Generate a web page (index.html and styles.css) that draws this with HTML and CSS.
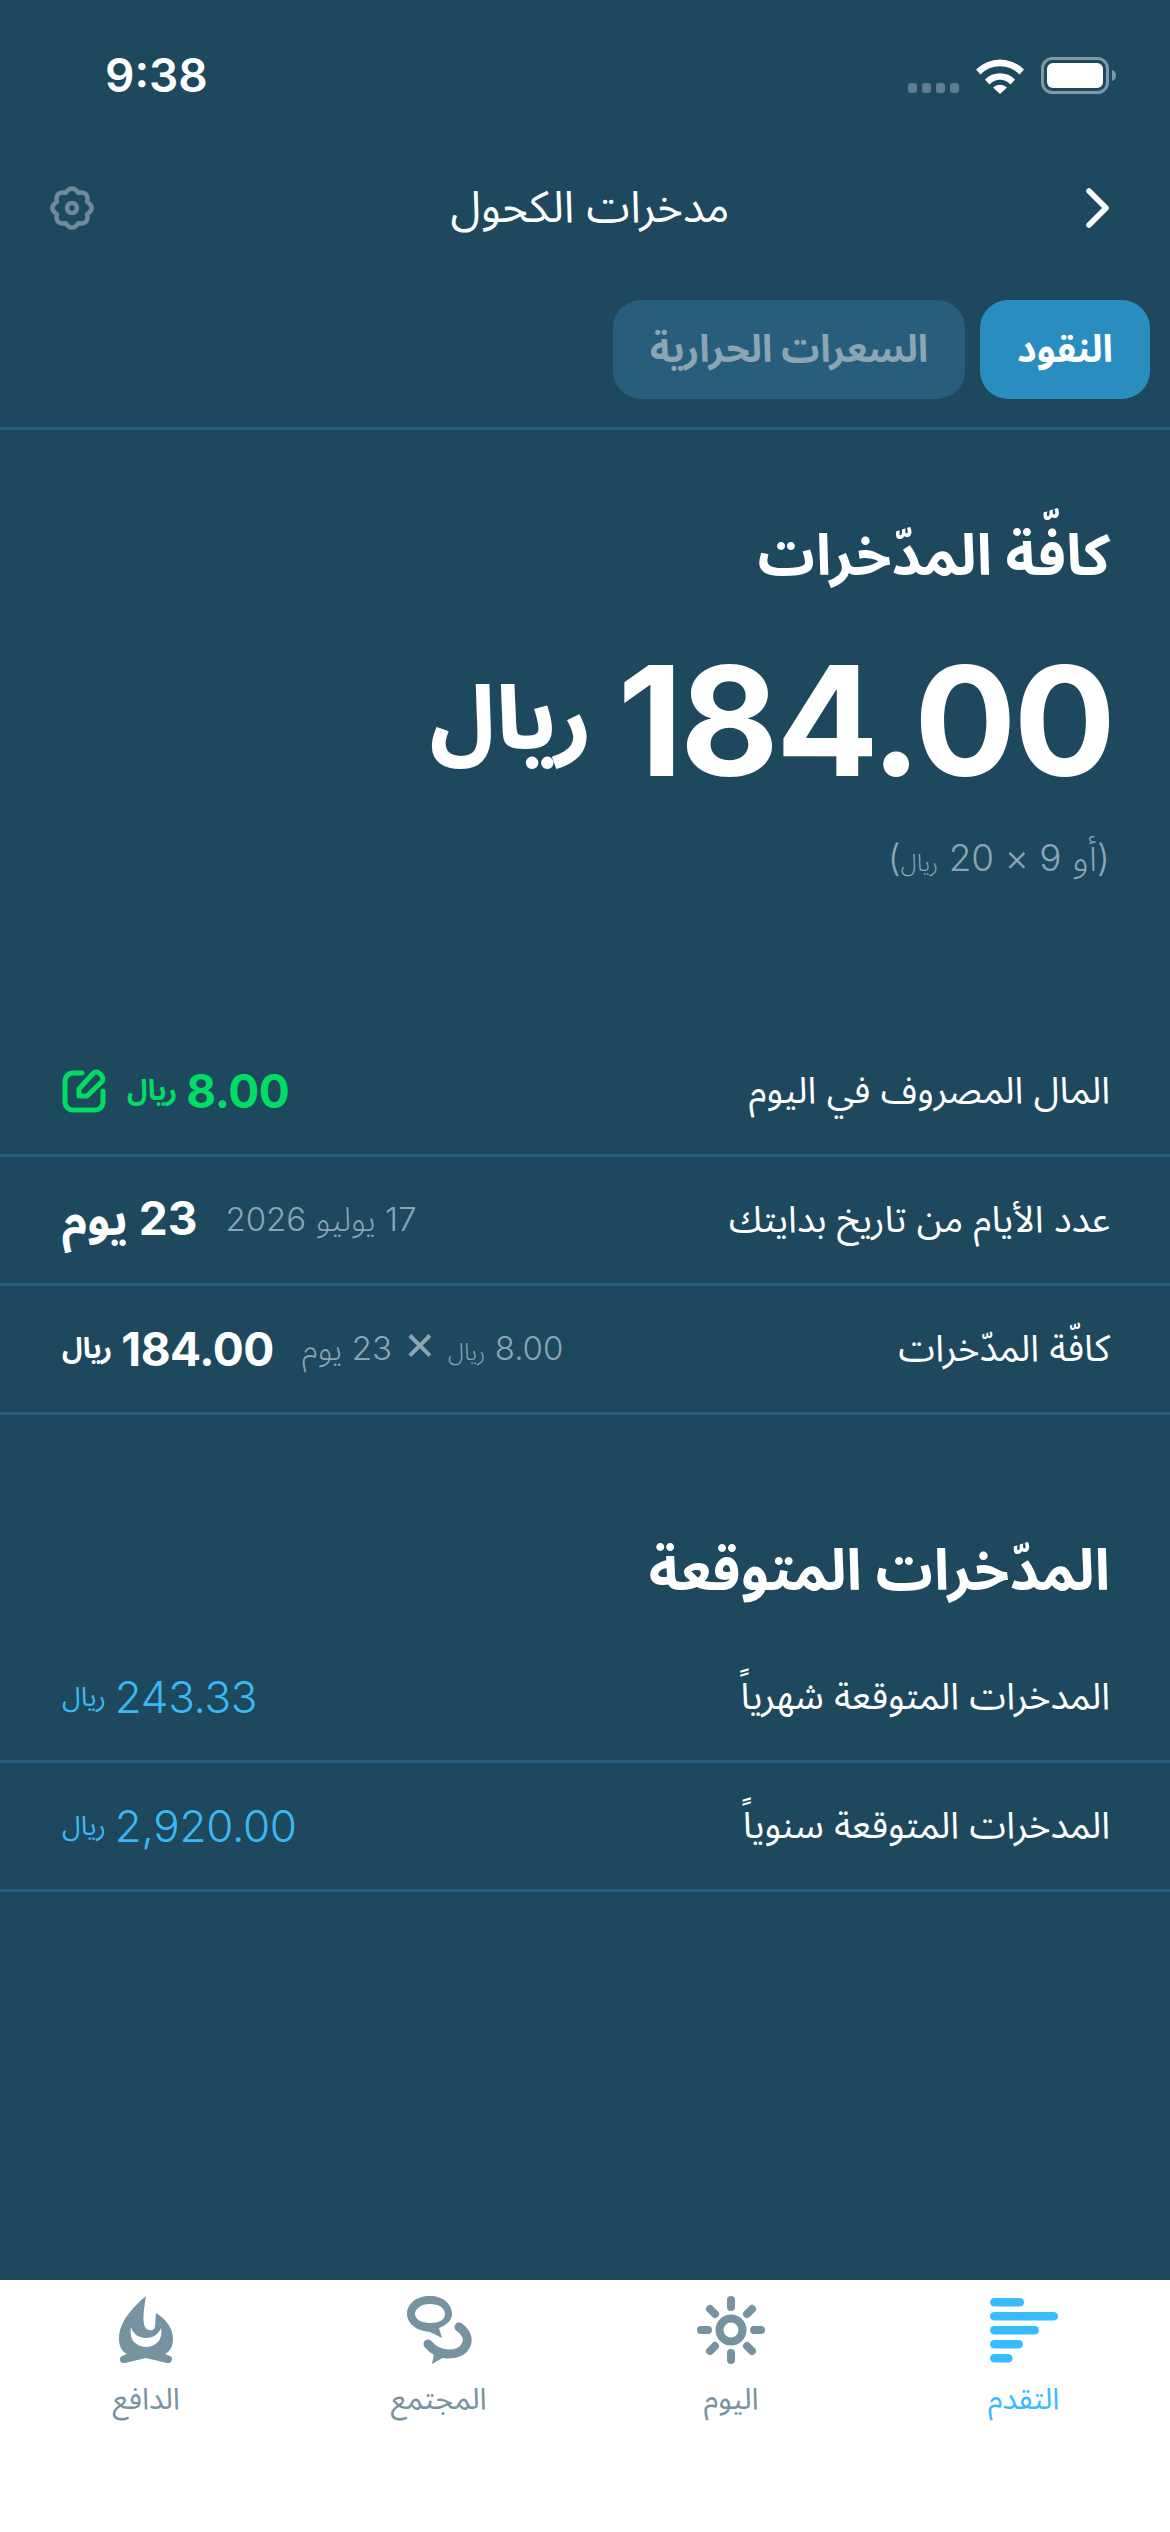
FILE: index.html
```html
<!DOCTYPE html>
<html lang="ar" dir="rtl">
  <head>
    <meta charset="UTF-8" />
    <meta name="viewport" content="width=device-width, initial-scale=1.0" />
    <title>مدخرات الكحول</title>
    <link rel="stylesheet" href="styles.css">
  </head>
  <body>
    <div class="page">
      <div class="status-bar">
        <span class="status-time">9:38</span>
        <div class="status-icons">
          <svg class="signal-icon" width="51" height="10" viewBox="0 0 51 10">
            <rect x="0" y="0" width="9" height="10" rx="3" />
            <rect x="14" y="0" width="9" height="10" rx="3" />
            <rect x="28" y="0" width="9" height="10" rx="3" />
            <rect x="42" y="0" width="9" height="10" rx="3" />
          </svg>
          <svg class="wifi-icon" width="48" height="36" viewBox="0 0 48 36">
            <path d="M0 11.500a34 34 0 0 1 48 0l-4.500 5a27 27 0 0 0-39 0z" />
            <path d="M9 21.500a21 21 0 0 1 30 0l-4.500 5a14 14 0 0 0-21 0z" />
            <path d="M17 29.500a10 10 0 0 1 14 0L24 36z" />
          </svg>
          <svg class="battery-icon" width="75" height="37" viewBox="0 0 75 37">
            <rect class="battery-shell" x="1.500" y="1.500" width="65" height="34" rx="10" />
            <rect class="battery-fill" x="6" y="6" width="56" height="25" rx="6" />
            <path class="battery-cap" d="M71 13c3 1 4 3 4 5.500s-1 4.500-4 5.500z" />
          </svg>
        </div>
      </div>

      <div class="nav-bar">
        <svg class="back-icon" width="24" height="40" viewBox="0 0 24 40">
          <path d="M3 3l17 17L3 37" />
        </svg>
        <h1 class="nav-title">مدخرات الكحول</h1>
        <svg class="gear-icon" width="44" height="44" viewBox="0 0 44 44">
          <path d="M37.200 15.700Q46 22 37.200 28.300Q39 39 28.300 37.200Q22 46 15.700 37.200Q5 39 6.800 28.300Q-2 22 6.800 15.700Q5 5 15.700 6.800Q22 -2 28.300 6.800Q39 5 37.200 15.700Z" />
          <circle cx="22" cy="22" r="5" />
        </svg>
      </div>

      <div class="tabs">
        <div class="tab tab-active">النقود</div>
        <div class="tab">السعرات الحرارية</div>
      </div>

      <section class="summary">
        <h2 class="section-title">كافّة المدّخرات</h2>
        <div class="total">
          <span class="total-num">184.00</span>
          <span class="total-cur">ريال</span>
        </div>
        <p class="total-note">(أو 9 × 20 <small>ريال</small>)</p>
      </section>

      <div class="rows">
        <div class="row">
          <span class="row-label">المال المصروف في اليوم</span>
          <div class="row-value">
            <span class="num-bold green">8.00</span>
            <span class="cur green">ريال</span>
            <svg class="edit-icon" width="44" height="44" viewBox="0 0 44 44">
              <path d="M20 4H11a8 8 0 0 0-8 8v21a8 8 0 0 0 8 8h22a8 8 0 0 0 8-8V22" />
              <path d="M17 20L31 4.500a4.500 4.500 0 0 1 6.500 0l2 2a4.500 4.500 0 0 1 0 6.500L25 27H17z" />
            </svg>
          </div>
        </div>
        <div class="row">
          <span class="row-label">عدد الأيام من تاريخ بدايتك</span>
          <div class="row-value">
            <span class="muted">17 يوليو 2026</span>
            <span class="num-bold white">23 يوم</span>
          </div>
        </div>
        <div class="row">
          <span class="row-label">كافّة المدّخرات</span>
          <div class="row-value">
            <span class="muted">8.00 <small>ريال</small> <b class="times">×</b> 23 يوم</span>
            <span class="num-bold white">184.00</span>
            <span class="cur white">ريال</span>
          </div>
        </div>
      </div>

      <section class="projected">
        <h2 class="section-title">المدّخرات المتوقعة</h2>
      </section>

      <div class="rows">
        <div class="row">
          <span class="row-label">المدخرات المتوقعة شهرياً</span>
          <div class="row-value">
            <span class="num-light">243.33</span>
            <span class="cur-light">ريال</span>
          </div>
        </div>
        <div class="row">
          <span class="row-label">المدخرات المتوقعة سنوياً</span>
          <div class="row-value">
            <span class="num-light">2,920.00</span>
            <span class="cur-light">ريال</span>
          </div>
        </div>
      </div>

      <nav class="tab-bar">
        <div class="tab-item tab-item-active">
          <svg width="68" height="68" viewBox="0 0 68 68">
            <rect x="0" y="2" width="34" height="8.500" rx="4.250" />
            <rect x="0" y="16" width="68" height="8.500" rx="4.250" />
            <rect x="0" y="30" width="49" height="8.500" rx="4.250" />
            <rect x="0" y="44" width="33" height="8.500" rx="4.250" />
            <rect x="0" y="58" width="22.500" height="8.500" rx="4.250" />
          </svg>
          <span>التقدم</span>
        </div>
        <div class="tab-item">
          <svg width="68" height="68" viewBox="0 0 68 68">
            <circle cx="34" cy="34" r="11.500" fill="none" stroke="#7792a0" stroke-width="8" />
            <path stroke="#7792a0" stroke-width="8" stroke-linecap="round" d="M34 4v7M34 57v7M4 34h7M57 34h7M13 13l5 5M55 13l-5 5M13 55l5-5M55 55l-5-5" />
          </svg>
          <span>اليوم</span>
        </div>
        <div class="tab-item">
          <svg width="68" height="68" viewBox="0 0 68 68">
            <path fill-rule="evenodd" d="M25 0C11 0 2 8 2 18c0 8 7 15 17 17l6 1 12 6-3-10c8-3 13-8 13-14C47 8 38 0 25 0zm0 8c9 0 15 4 15 10s-6 9-15 9-15-4-15-9S16 8 25 8z" />
            <path class="community-arc" d="M54 31c7 5 10 12 7 18-3 7-11 9-18 9-8 0-15-4-20-10" />
            <path d="M30 53l-3 15 19-11z" />
          </svg>
          <span>المجتمع</span>
        </div>
        <div class="tab-item">
          <svg width="68" height="68" viewBox="0 0 68 68">
            <path fill-rule="evenodd" d="M34 0C20 12 7 26 7 43c0 6 2 12 8 15l-5 2c-4 2-2 8 3 7l21-5 21 5c5 1 7-5 3-7l-5-2c6-3 8-9 8-15 0-11-7-20-17-26-1 6 0 14-2 16-2 2-7 2-9-2-3-6-1-19 1-31zM19 31c2 7 8 11 15 11s13-4 15-10c1 5 0 11-3 14-3 3-8 5-12 5s-9-2-12-5c-3-3-4-9-3-15z" />
          </svg>
          <span>الدافع</span>
        </div>
      </nav>
    </div>
  </body>
</html>
```

FILE: styles.css
```css
* {
  box-sizing: border-box;
  margin: 0;
  padding: 0;
}

body {
  background: #1e485d;
  font-family: "Inter", "Noto Sans Arabic", "DejaVu Sans", sans-serif;
  color: #ffffff;
}

.page {
  display: flex;
  flex-direction: column;
  width: 1170px;
  height: 2532px;
  overflow: hidden;
}

.status-bar {
  display: flex;
  direction: ltr;
  justify-content: space-between;
  align-items: center;
  height: 150px;
  padding: 0 54px 0 105px;
}

.status-time {
  font-size: 46px;
  font-weight: 600;
}

.status-icons {
  display: flex;
  align-items: flex-end;
  gap: 17px;
}

.signal-icon {
  fill: #5f7f90;
  margin-bottom: 1px;
}

.wifi-icon path {
  fill: #ffffff;
}

.battery-shell {
  fill: none;
  stroke: #7e98a6;
  stroke-width: 3;
}

.battery-fill {
  fill: #ffffff;
}

.battery-cap {
  fill: #7e98a6;
}

.nav-bar {
  display: flex;
  justify-content: space-between;
  align-items: center;
  height: 116px;
  padding: 0 60px 0 50px;
}

.back-icon path {
  fill: none;
  stroke: #ffffff;
  stroke-width: 5.500;
  stroke-linecap: round;
  stroke-linejoin: round;
}

.nav-title {
  font-size: 44px;
  font-weight: 400;
}

.gear-icon path,
.gear-icon circle {
  fill: none;
  stroke: #6f8a99;
  stroke-width: 4.500;
}

.tabs {
  display: flex;
  gap: 15px;
  height: 130px;
  margin-top: 34px;
  padding: 0 20px 28px;
  border-bottom: 3px solid #265e7b;
}

.tab {
  display: flex;
  align-items: center;
  height: 99px;
  padding: 0 37px;
  border-radius: 28px;
  background: #265e7b;
  color: #8ba5b3;
  font-size: 38px;
  font-weight: 700;
}

.tab-active {
  background: #2a8dc0;
  color: #ffffff;
}

.summary {
  height: 598px;
  padding: 80px 60px 0;
}

.section-title {
  font-size: 57px;
  font-weight: 700;
  line-height: 90px;
}

.total {
  display: flex;
  align-items: center;
  gap: 26px;
  margin-top: 36px;
  margin-right: -3px;
  height: 170px;
  font-weight: 700;
}

.total-num {
  direction: ltr;
  font-size: 152px;
  letter-spacing: -3px;
}

.total-cur {
  font-size: 87px;
  font-weight: 800;
}

.total-note {
  margin-top: 14px;
  color: #8ba5b3;
  font-size: 37px;
  font-weight: 300;
}

.total-note small,
.muted small {
  font-size: 24px;
}

.row {
  display: flex;
  justify-content: space-between;
  align-items: center;
  height: 129px;
  padding: 0 60px 0 62px;
  border-bottom: 3px solid #265e7b;
}

.row-label {
  font-size: 37px;
  font-weight: 400;
}

.row-value {
  display: flex;
  align-items: center;
  gap: 9px;
}

.muted {
  margin-left: 19px;
  color: #8ba5b3;
  font-size: 33px;
  font-weight: 300;
}

.times {
  font-weight: 400;
  font-size: 50px;
  line-height: 1;
  margin: 0 2px;
}

.num-bold {
  font-size: 46px;
  font-weight: 700;
  letter-spacing: -0.500px;
}

.cur {
  font-size: 28px;
  font-weight: 700;
}

.green {
  color: #00dc64;
}

.white {
  color: #ffffff;
}

.edit-icon {
  margin-right: 12px;
}

.edit-icon path {
  fill: none;
  stroke: #00dc64;
  stroke-width: 5;
  stroke-linecap: round;
  stroke-linejoin: round;
}

.num-light {
  color: #3ab8f5;
  font-size: 44px;
  font-weight: 300;
  letter-spacing: -0.300px;
}

.cur-light {
  color: #3ab8f5;
  font-size: 27px;
  font-weight: 400;
}

.community-arc {
  fill: none;
  stroke: #7792a0;
  stroke-width: 9;
  stroke-linecap: round;
}

.projected {
  height: 219px;
  padding: 110px 60px 0;
}

.tab-bar {
  display: grid;
  grid-template-columns: repeat(4, 1fr);
  height: 252px;
  margin-top: auto;
  padding-top: 16px;
  background: #ffffff;
}

.tab-item {
  display: flex;
  flex-direction: column;
  align-items: center;
  color: #7792a0;
  fill: #7792a0;
  font-size: 30px;
}

.tab-item span {
  margin-top: 4px;
}

.tab-item-active {
  color: #38bcff;
  fill: #38bcff;
}
```
